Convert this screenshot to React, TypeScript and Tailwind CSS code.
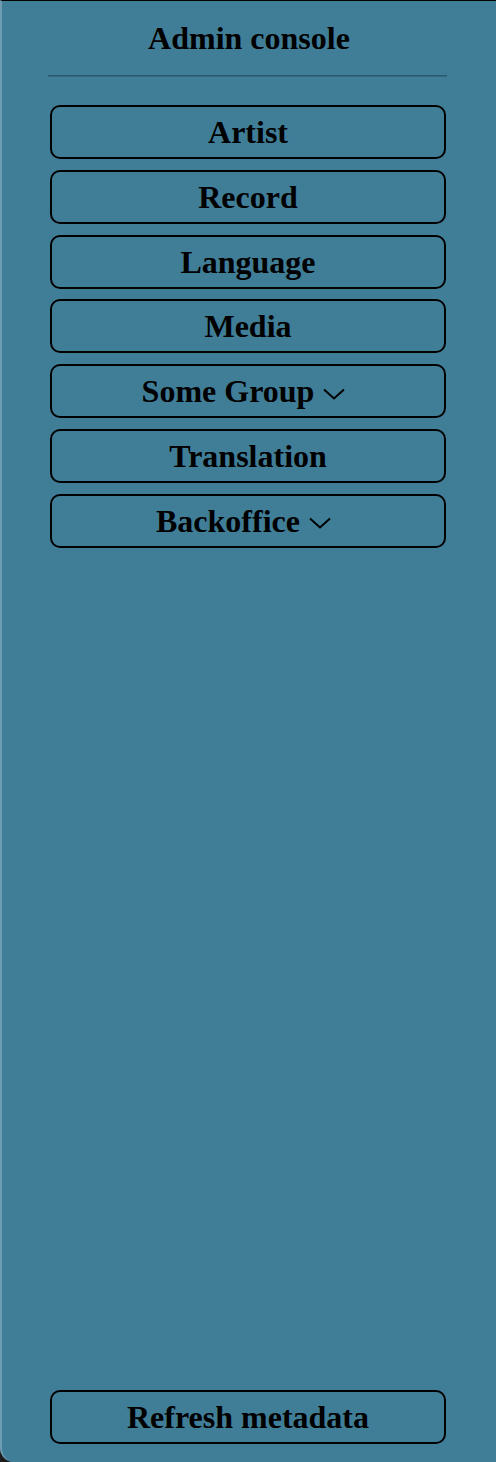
import React from "react";

const items: { label: string; group?: boolean }[] = [
  { label: "Artist" },
  { label: "Record" },
  { label: "Language" },
  { label: "Media" },
  { label: "Some Group", group: true },
  { label: "Translation" },
  { label: "Backoffice", group: true },
];

function Chevron() {
  return (
    <svg width="22" height="12" viewBox="0 0 22 12" fill="none" className="ml-[9px] mr-[9px] mt-[5px]">
      <path d="M1 1.5 L11 10.5 L21 1.5" stroke="black" strokeWidth="2" />
    </svg>
  );
}

function NavButton({ label, group }: { label: string; group?: boolean }) {
  return (
    <button className="flex h-[54px] w-full items-center justify-center rounded-[10px] border-2 border-black text-[32px] font-bold leading-none text-black">
      <span>{label}</span>
      {group && <Chevron />}
    </button>
  );
}

export default function App() {
  return (
    <div className="h-[1462px] w-[496px] bg-[#1c1c1c] font-['Liberation_Serif',serif]">
      <div className="flex h-full flex-col rounded-bl-[14px] border-t border-l-2 border-t-black border-l-[#6e9db3] bg-[#407e98]">
        <h1 className="pt-[19px] text-center text-[32px] font-bold leading-[37px] text-black">
          Admin console
        </h1>
        <div className="ml-[46px] mr-[49px] mt-[18px] h-[2px] border-t border-[#2a586d] bg-[#36697f]" />
        <nav className="ml-[48px] mr-[50px] mt-[28px] flex flex-col gap-[10.8px]">
          {items.map((it) => (
            <NavButton key={it.label} label={it.label} group={it.group} />
          ))}
        </nav>
        <div className="flex-1" />
        <div className="mb-[18px] ml-[48px] mr-[50px]">
          <NavButton label="Refresh metadata" />
        </div>
      </div>
    </div>
  );
}
